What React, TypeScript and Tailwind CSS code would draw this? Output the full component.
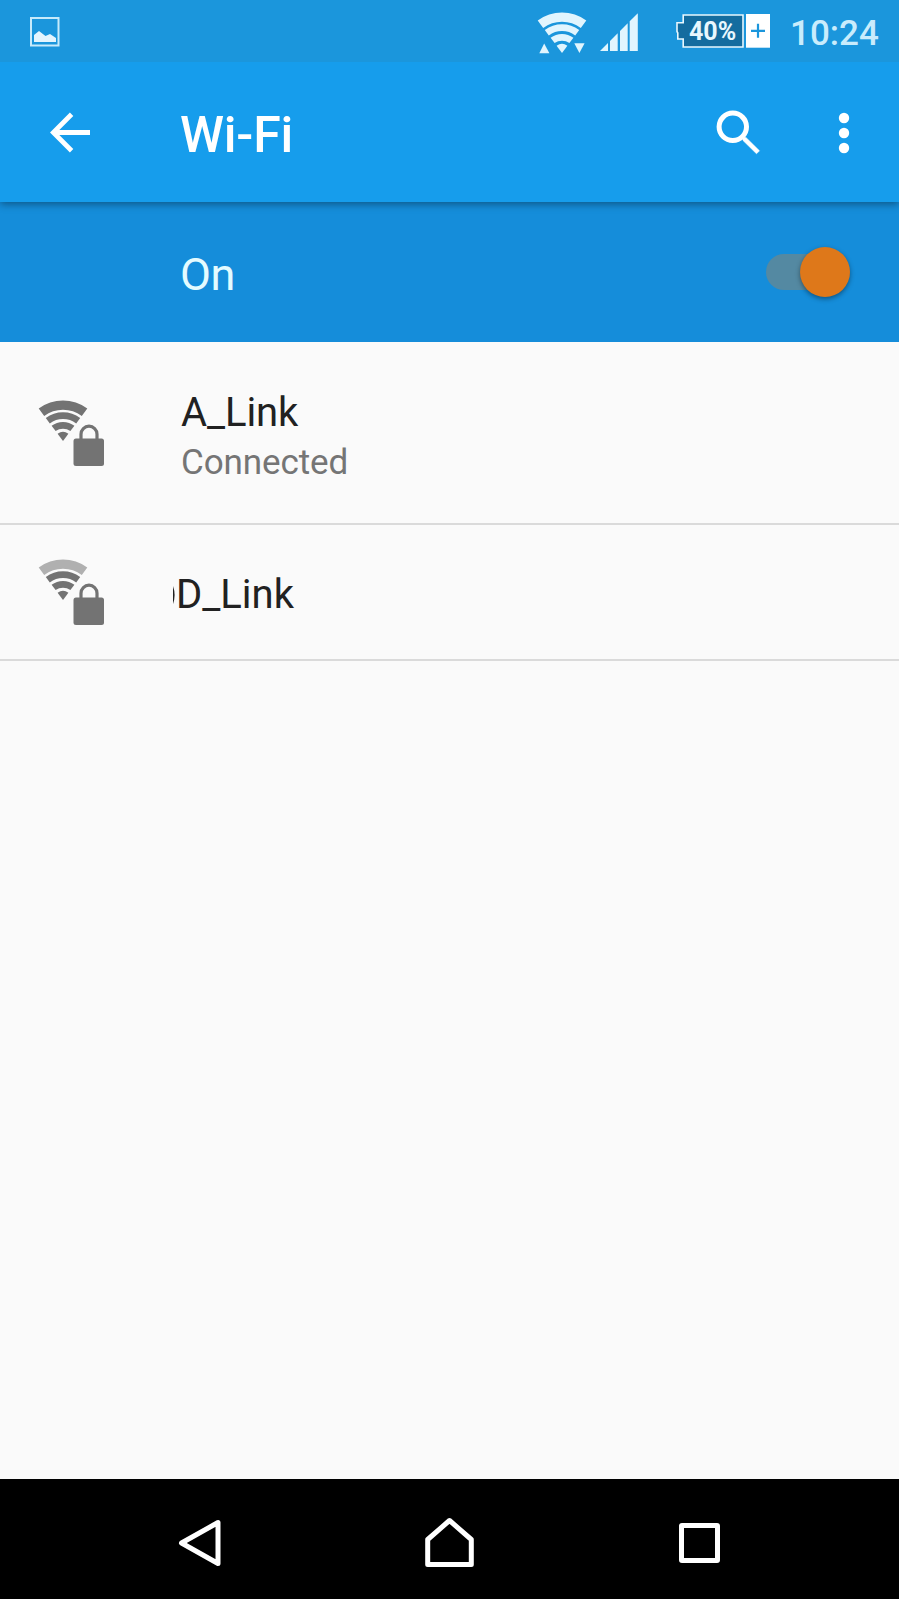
import React from 'react'

// Fan of four arcs with its tip at (25, 41)
const WifiFan = ({ weak = false }: { weak?: boolean }) => (
  <>
    <path d="M.7 8.6A40.5 40.5 0 0 1 49.3 8.6L43.8 16A31.3 31.3 0 0 0 6.2 16Z" opacity={weak ? 0.55 : 1} />
    <path d="M7.8 18A28.7 28.7 0 0 1 42.2 18L38.2 23.4A22 22 0 0 0 11.8 23.4Z" />
    <path d="M13.6 25.8A19 19 0 0 1 36.4 25.8L32.4 31.1A12.4 12.4 0 0 0 17.6 31.1Z" />
    <path d="M19.6 33.8A9 9 0 0 1 30.4 33.8L25 41Z" />
  </>
)

const SecureWifiIcon = ({ weak = false }: { weak?: boolean }) => (
  <svg className="w-[68px] h-[68px] mt-[2px] shrink-0" viewBox="0 0 68 68" fill="#737373">
    <WifiFan weak={weak} />
    <rect x="35.5" y="38.6" width="30.5" height="27.4" rx="2.5" />
    <path d="M43 39.5V34.2a8 8 0 0 1 16 0V39.5" fill="none" stroke="#737373" strokeWidth="3.2" />
  </svg>
)

const StatusBar = () => (
  <div className="relative z-20 h-[62px] bg-[#1b96dc] flex items-start">
    <svg className="w-[30px] h-[30px] ml-[30px] mt-[17px]" viewBox="0 0 30 30">
      <rect x="1" y="1" width="27.5" height="27.5" fill="none" stroke="#c6eafb" strokeWidth="2" />
      <path d="M4 25V18L9 14L15.5 19L20 17L26 21V25Z" fill="#e4f5fe" />
    </svg>
    <svg className="w-[50px] h-[42px] ml-[477px] mt-[12px]" viewBox="0 0 50 42" fill="#e1f5fe">
      <WifiFan />
      <path d="M2.3 41.2L7.2 31.5L12.4 41.2Z" />
      <path d="M37.3 31.2H47.6L42.4 41Z" />
    </svg>
    <svg className="w-[39px] h-[39px] ml-[13px] mt-[13px]" viewBox="0 0 39 39" fill="#e1f5fe">
      <path d="M0 38L8 30V38Z" />
      <path d="M10 28L17.7 20.3V38H10Z" />
      <path d="M20 18L27.7 10.3V38H20Z" />
      <path d="M29.7 8.3L37.8 .3V38H29.7Z" />
    </svg>
    <div className="relative w-[94px] h-[34px] ml-[37px] mt-[14px]">
      <svg className="w-[94px] h-[34px]" viewBox="0 0 94 34">
        <path d="M7.2 1H67V33H7.2V25H1.8V19L1 17.5V8.8H7.2Z" fill="#146c9f" stroke="#e8f7fe" strokeWidth="1.6" />
        <rect x="70" y="0" width="24" height="33.7" fill="#fff" />
        <path d="M75 16.8H89M82 9.8V23.8" stroke="#1b96dc" strokeWidth="2.2" />
      </svg>
      <span className="absolute left-[13px] top-px text-[25px] leading-[34px] font-bold text-[#e8f7fe]">40%</span>
    </div>
    <span className="ml-[20px] mt-[14px] text-[35px] leading-[40px] font-medium text-[#c9ecfc]">10:24</span>
  </div>
)

const AppBar = () => (
  <header className="relative z-10 h-[140px] bg-[#169dec] flex items-center shadow-[0_2px_8px_rgba(0,0,0,0.4)]">
    <svg className="w-[41px] h-[41px] ml-[50px]" viewBox="0 0 41 41" fill="none" stroke="#fff" strokeWidth="4.8">
      <path d="M40 20.5H4M21.6 2.3L3.4 20.5L21.6 38.7" />
    </svg>
    <h1 className="ml-[89px] mt-[6px] text-[50px] leading-[60px] font-medium tracking-[-0.2px] text-white">Wi-Fi</h1>
    <svg className="w-[45px] h-[45px] ml-auto" viewBox="0 0 45 45" fill="none" stroke="#fff">
      <circle cx="16.8" cy="16.8" r="13.7" strokeWidth="5" />
      <path d="M27 27.5L30 27.5L43.5 40.8L40.5 43.8L27 30.5Z" fill="#fff" strokeWidth="0.5" />
    </svg>
    <svg className="w-[12px] h-[42px] ml-[77px] mr-[49px] mt-px" viewBox="0 0 12 42" fill="#fff">
      <circle cx="6" cy="6" r="5.2" />
      <circle cx="6" cy="21" r="5.2" />
      <circle cx="6" cy="36" r="5.2" />
    </svg>
  </header>
)

const WifiToggle = () => (
  <div className="h-[140px] bg-[#158dda] flex items-center justify-between pl-[180px] pr-[49px]">
    <span className="mt-[6px] text-[45px] leading-[56px] tracking-[-0.5px] text-[#e4fbff]">On</span>
    <div className="w-[84px] h-[36px] rounded-full bg-[#5489a2] flex items-center justify-end">
      <div className="w-[50px] h-[50px] rounded-full bg-[#de781a] shadow-[0_2px_5px_rgba(0,0,0,0.4)]" />
    </div>
  </div>
)

const NavBar = () => (
  <nav className="h-[120px] bg-black flex items-center">
    <svg className="w-[44px] h-[48px] ml-[178px] mt-[8px]" viewBox="0 0 44 48" fill="none" stroke="#fff" strokeWidth="5" strokeLinejoin="round">
      <path d="M40 3.5V44.5L3.5 24Z" />
    </svg>
    <svg className="w-[50px] h-[50px] ml-[202px] mt-[5px]" viewBox="0 0 50 50" fill="none" stroke="#fff" strokeWidth="5" strokeLinejoin="round">
      <path d="M25.5 3.5L47.3 22.5V47.5H3.7V22.5Z" />
    </svg>
    <div className="w-[41px] h-[40px] ml-[205px] mt-[8px] rounded-[3px] border-[5px] border-white" />
  </nav>
)

const App = () => {
  return (
    <div className="w-full h-[1599px] bg-[#fafafa] flex flex-col overflow-hidden font-['Roboto',sans-serif]">
      <StatusBar />
      <AppBar />
      <WifiToggle />

      <main className="flex-1">
        <div className="h-[183px] border-b-2 border-[#dadada] flex items-center pl-[38px]">
          <SecureWifiIcon />
          <div className="ml-[75px] mt-[9px] tracking-[-0.1px]">
            <div className="text-[40px] leading-[51px] text-[#212121]">A_Link</div>
            <div className="text-[35px] leading-[50px] text-[#757575]">Connected</div>
          </div>
        </div>
        <div className="h-[136px] border-b-2 border-[#dadada] flex items-center pl-[38px]">
          <SecureWifiIcon weak />
          {/* Tail of a cut-off glyph before the name */}
          <svg className="w-[3px] h-[18px] ml-[67px] mt-[6px]" viewBox="0 0 3 18" fill="#212121">
            <path d="M0 0Q3.2 9 0 18Z" />
          </svg>
          <div className="mt-[5px] text-[40px] leading-[50px] text-[#212121]">D_Link</div>
        </div>
      </main>

      <NavBar />
    </div>
  )
}

export default App
